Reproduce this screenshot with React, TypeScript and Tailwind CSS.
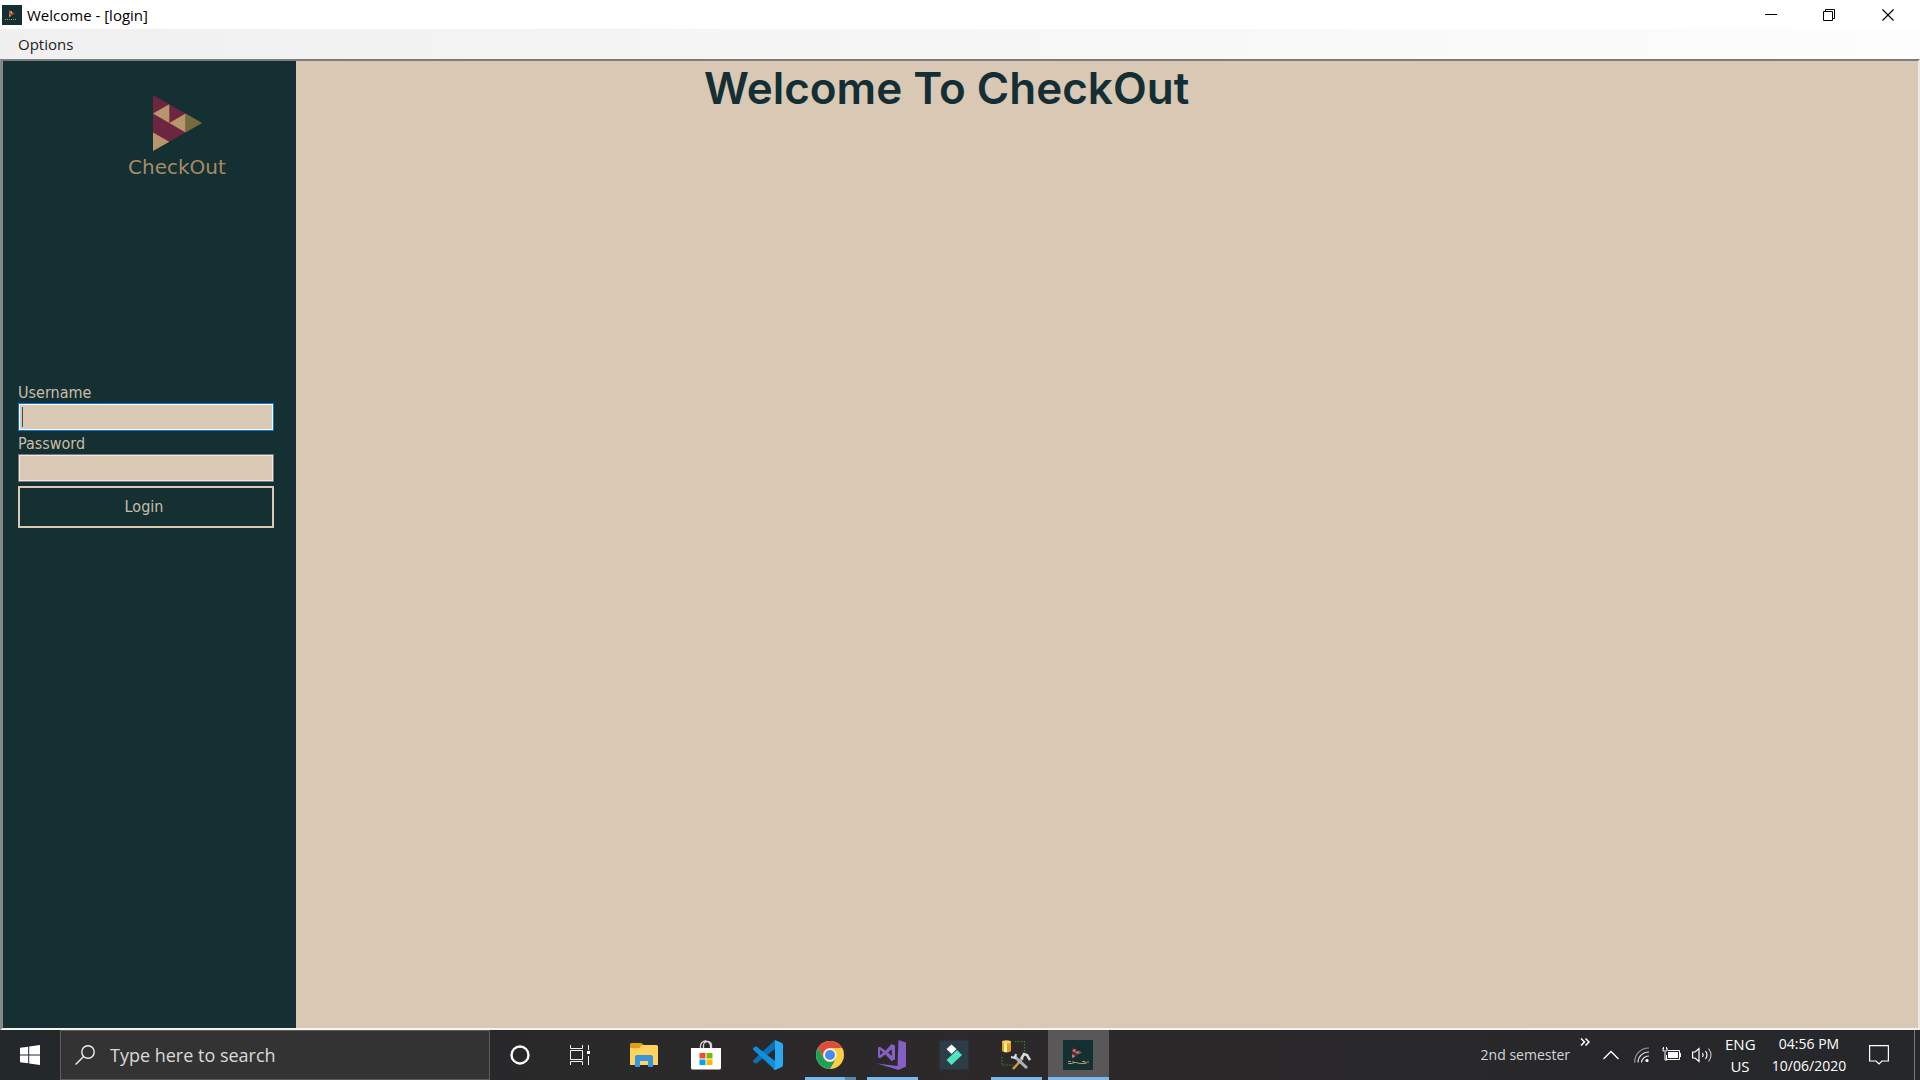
import type { ReactNode } from 'react';

function CheckoutMark({ className }: { className: string }) {
  return (
    <svg className={className} viewBox="0 0 49 56" aria-hidden="true">
      <path d="M0 0 49 28 0 56Z" fill="#6d2640" />
      <path d="M0 18.5 16.3 9.3V28Z" fill="#b8966b" />
      <path d="M16.3 28 32.6 18.6V37.4Z" fill="#b8966b" />
      <path d="M0 37.4 16.3 46.7 0 56Z" fill="#b8966b" />
      <path d="M32.6 18.6 49 28 32.6 37.4Z" fill="#766b3c" />
    </svg>
  );
}

function TitleBar() {
  return (
    <header className="flex h-[29px] shrink-0 items-center bg-white">
      <span className="ml-0.5 flex size-5 items-center justify-center bg-[#143032]">
        <svg viewBox="0 0 20 20" className="size-5" aria-hidden="true">
          <path d="M7 5l6 3.5L7 12Z" fill="#a8433f" />
          <path d="M7 7l3-1v3ZM7 12l2-1-2-2Z" fill="#c9a06f" />
          <path d="M3 14.5h11" stroke="#b8966b" strokeDasharray="1 1" />
        </svg>
      </span>
      <h1 className="ml-[5px] text-[15px] leading-5 text-black">Welcome - [login]</h1>
      <div className="ml-auto flex h-full pr-0.5">
        <button aria-label="Minimize" className="flex w-[58px] items-center justify-center">
          <svg width="12" height="12" viewBox="0 0 12 12"><path d="M0 5.5h12" stroke="#000" /></svg>
        </button>
        <button aria-label="Restore" className="flex w-[58px] items-center justify-center">
          <svg width="12" height="12" viewBox="0 0 12 12" fill="none" stroke="#000">
            <path d="M.5 2.5h9v9h-9zM2.5 2.5v-2h9v9h-2" />
          </svg>
        </button>
        <button aria-label="Close" className="flex w-[60px] items-center justify-center">
          <svg width="12" height="12" viewBox="0 0 12 12"><path d="M.5 .5l11 11M11.5 .5l-11 11" stroke="#000" strokeWidth="1.2" /></svg>
        </button>
      </div>
    </header>
  );
}

function LoginForm() {
  return (
    <form className="mt-[204px] mr-[22px] ml-[15px] flex flex-col font-['DejaVu_Sans_Condensed','DejaVu_Sans',sans-serif] text-base leading-5 text-[#c9bda9]" onSubmit={(e) => e.preventDefault()}>
      <label htmlFor="username">Username</label>
      <div className="relative mb-[3px]">
        <input
          id="username"
          type="text"
          className="block h-7 w-full border border-[#0078d7] bg-[#d9c8b3] px-1 text-black ring-1 ring-white outline-none ring-inset"
        />
        <span className="absolute top-1 left-1 h-5 w-px bg-[#4a4a4a]" />
      </div>
      <label htmlFor="password">Password</label>
      <input
        id="password"
        type="password"
        className="mb-1 block h-7 w-full border border-[#7a7a7a] bg-[#d9c8b3] px-1 text-black ring-1 ring-[#f0e8e4] outline-none ring-inset"
      />
      <button type="submit" className="h-[42px] border-2 border-[#d9c8b3] bg-[#143032] pr-1">
        Login
      </button>
    </form>
  );
}

function Task({ label, state, children }: { label: string; state?: 'open' | 'stacked' | 'active'; children: ReactNode }) {
  return (
    <button
      aria-label={label}
      className={
        state === 'active'
          ? 'relative mr-px flex w-[61px] items-center justify-center bg-[#5a5758] pr-px'
          : 'relative mr-px flex w-[61px] items-center justify-center pr-0.5'
      }
    >
      {children}
      {state === 'active' && <span className="absolute inset-x-0 bottom-0 h-[3px] bg-[#76b9ed]" />}
      {state === 'open' && <span className="absolute inset-x-[5px] bottom-0 h-[3px] bg-[#76b9ed]" />}
      {state === 'stacked' && (
        <span className="absolute inset-x-[5px] bottom-0 h-[3px] border-r-[11px] border-[#5a87ac] bg-[#76b9ed]" />
      )}
    </button>
  );
}

function Taskbar() {
  return (
    <footer className="flex h-[50px] shrink-0 bg-linear-to-r from-[#23282a] via-[#2d292a] to-[#25272a] text-white">
      <button aria-label="Start" className="flex w-[60px] items-center justify-center">
        <svg width="20" height="20" viewBox="0 0 20 20" fill="#fff">
          <path d="M0 2.8 8.2 1.7V9.5H0ZM9.2 1.5 20 0V9.5H9.2ZM0 10.5H8.2V18.3L0 17.2ZM9.2 10.5H20V20L9.2 18.5Z" />
        </svg>
      </button>
      <div className="flex w-[430px] items-center border border-[#5c5c5c] bg-[#333333] pl-3.5">
        <svg width="20" height="20" viewBox="0 0 20 20" fill="none" stroke="#f0f0f0" strokeWidth="1.4">
          <circle cx="13" cy="7" r="6.2" />
          <path d="M8.6 11.4.6 19.4" />
        </svg>
        <input
          type="text"
          aria-label="Search"
          placeholder="Type here to search"
          className="ml-[15px] min-w-0 flex-1 bg-transparent text-lg leading-6 outline-none placeholder:text-[#dadada]"
        />
      </div>
      <button aria-label="Cortana" className="flex w-[60px] items-center justify-center">
        <svg width="20" height="20" viewBox="0 0 20 20"><circle cx="10" cy="10" r="8.5" fill="none" stroke="#fff" strokeWidth="2.4" /></svg>
      </button>
      <button aria-label="Task View" className="flex w-[60px] items-center justify-center">
        <svg width="20" height="20" viewBox="0 0 20 20" fill="none" stroke="#f4f4f4">
          <path d="M.5 0v3.5h12V0M.5 5.5h12v9H.5zM.5 20v-3.5h12V20M18.5 0v5M18.5 11v9" />
          <path d="M17 6h3v3h-3z" fill="#fff" stroke="none" />
        </svg>
      </button>
      <nav aria-label="Apps" className="ml-1 flex">
        <Task label="File Explorer">
          <svg width="28" height="24" viewBox="0 0 28 24">
            <path d="M0 1.5Q0 0 1.5 0h10L14 2.5 11 6H0Z" fill="#e0a010" />
            <path d="M0 5h9l3.5-3H26.5Q28 2 28 3.5V22H0Z" fill="#ffd35e" />
            <path d="M5 24V14q0-2 2-2h14q2 0 2 2v10h-5v-6h-8v6Z" fill="#3a93dd" />
          </svg>
        </Task>
        <Task label="Microsoft Store">
          <svg width="30" height="30" viewBox="0 0 30 30">
            <path d="M9.5 8V6a5 5 0 0 1 10 0v2M12.5 8V6a4 4 0 0 1 8-1v3" fill="none" stroke="#d8d8d8" strokeWidth="1.3" />
            <path d="M0 8h30v20q0 1.500-1.500 1.500h-27Q0 29.500 0 28Z" fill="#fff" />
            <path d="M8.500 13h6v5.500h-6z" fill="#f25022" />
            <path d="M15.500 13h6v5.500h-6z" fill="#7fba00" />
            <path d="M8.500 19.500h6V25h-6z" fill="#00a4ef" />
            <path d="M15.500 19.500h6V25h-6z" fill="#ffb900" />
          </svg>
        </Task>
        <Task label="Visual Studio Code">
          <svg width="30" height="30" viewBox="0 0 30 30">
            <path d="M22 0 0 20.500v1.200L2 23.200q1 .4 1.700 0L22 9Z" fill="#0d6fb5" />
            <path d="M22 30 0 9.500V8.300L2 6.800q1-.4 1.700 0L22 21Z" fill="#0f8fdc" />
            <path d="M22 0 28.500 2.800Q30 3.500 30 5v20q0 1.500-1.500 2.200L22 30Q20 29.500 22 27Z" fill="#28a9f1" />
          </svg>
        </Task>
        <Task label="Google Chrome" state="stacked">
          <svg width="28" height="28" viewBox="0 0 28 28">
            <circle cx="14" cy="14" r="14" fill="#ffcd40" />
            <path d="M1.900 7A14 14 0 0 1 26.100 7H14A7 7 0 0 0 7.900 17.500Z" fill="#dc4b3e" />
            <path d="M1.900 7A14 14 0 0 0 14 28L20.100 17.500A7 7 0 0 1 7.900 17.500Z" fill="#1aa15f" />
            <circle cx="14" cy="14" r="6.500" fill="#f4f4f4" />
            <circle cx="14" cy="14" r="5" fill="#4a8af4" />
          </svg>
        </Task>
        <Task label="Visual Studio" state="open">
          <svg width="30" height="30" viewBox="0 0 30 30" fill="#865fc5">
            <path d="M21.500 0 29 2.500V26.500L21.500 30 0 23.500 20.500 26Z" />
            <path fillRule="evenodd" d="M1 7.500 3 6.700 8.500 10.800 14.500 4 18 5.500V19.500L14.500 21 8.500 14.400 3 18.300 1 17.500ZM3.200 9.700V15.300L6 12.600ZM11 12.600 14.800 16V9.200Z" />
          </svg>
        </Task>
        <Task label="Filmora">
          <svg width="30" height="30" viewBox="0 0 30 30">
            <path d="M.5.500h29v29H.5z" fill="#2d3d47" />
            <path d="M12.500 4.500 17.500 9 12.500 14 7.500 9Z" fill="#fff" />
            <path d="M18 10 23 15 12.500 25 7.500 20Z" fill="#4fe3c1" />
          </svg>
        </Task>
        <Task label="SQL Server tools" state="open">
          <svg width="30" height="30" viewBox="0 0 30 30" fill="none">
            <path d="M14 1.500H23.500V12M1 17v8H12" stroke="#2c8a22" strokeWidth="1.200" strokeDasharray="1.500 1.500" />
            <path d="M1 2v9q4.500 3 9 0V2Z" fill="#e0a31c" />
            <path d="M3 3h3v9H3Z" fill="#fff0a0" />
            <ellipse cx="5.500" cy="2" rx="4.500" ry="1.700" fill="#f6d35b" />
            <path d="M12 29 22 18" stroke="#d59b35" strokeWidth="2.500" />
            <path d="M20 19 23 14l3 1 3 5" stroke="#d5dce4" strokeWidth="2.500" />
            <path d="M13 16 26 28" stroke="#a9b5c4" strokeWidth="3" />
            <path d="M10 17l4 1 1-4" stroke="#d5dce4" strokeWidth="2" />
          </svg>
        </Task>
        <Task label="CheckOut" state="active">
          <span className="flex size-[30px] flex-col items-center bg-[#143032] pt-[7px]">
            <CheckoutMark className="mr-0.5 h-[11px] w-[10px]" />
            <svg width="22" height="5" viewBox="0 0 22 5" className="mt-0.5" aria-hidden="true">
              <path d="M1 1.500h3M1 3.500h4M6 1v3M6 2.500h4M11 2v2M12 3.500h3M15 1.500h3v2h-3M19 2v2M20 2h2" stroke="#b8966b" fill="none" />
            </svg>
          </span>
        </Task>
      </nav>
      <div className="ml-auto flex items-center">
        <span className="text-sm leading-5 text-[#d6d6d6]">2nd semester</span>
        <button aria-label="More toolbar items" className="mb-[26px] ml-[10px]">
          <svg width="10" height="8" viewBox="0 0 10 8" fill="none" stroke="#fff" strokeWidth="1.500"><path d="M1 .5 4.500 4 1 7.500M5.500 .5 9 4 5.500 7.500" /></svg>
        </button>
        <button aria-label="Hidden icons" className="ml-[13px]">
          <svg width="16" height="10" viewBox="0 0 16 10" fill="none" stroke="#fff" strokeWidth="1.300"><path d="M.5 9 8 1.500 15.500 9" /></svg>
        </button>
        <button aria-label="Network" className="ml-[15px]">
          <svg width="16" height="16" viewBox="0 0 16 16" fill="none" strokeWidth="1.200">
            <path d="M.7 15.500A14 14 0 0 1 15 1" stroke="#9a9a9a" />
            <path d="M4 15.500A10.500 10.500 0 0 1 15 5M7.500 15.500A7 7 0 0 1 15 9" stroke="#ddd" />
            <circle cx="13" cy="13.500" r="1.600" fill="#fff" />
          </svg>
        </button>
        <button aria-label="Battery" className="ml-3">
          <svg width="20" height="16" viewBox="0 0 20 16" fill="none" stroke="#fff">
            <path d="M6 3.500H17.500V12.500H4.500V8M18.500 6v4M1 1v3h4V1M3 5v8h2M1.500 0v2M4.500 0v2" />
            <path d="M6 5h10v6H6z" fill="#fff" stroke="none" />
          </svg>
        </button>
        <button aria-label="Volume" className="ml-[10px]">
          <svg width="21" height="18" viewBox="0 0 21 18" fill="none" stroke="#fff" strokeWidth="1.200">
            <path d="M.6 6H3L7 2.500V15.500L3 12H.6ZM10.500 7q1.500 2 0 4M13.500 5q3 4 0 8" />
            <path d="M16.500 2.500q5 6.500 0 13" stroke="#bbb" />
          </svg>
        </button>
        <button className="ml-3 w-[30px] text-center text-[15px] leading-[22px]">
          <span className="block">ENG</span>
          <span className="block">US</span>
        </button>
        <button className="ml-[15px] w-[78px] text-center text-sm leading-[22px] whitespace-nowrap">
          <span className="block">04:56 PM</span>
          <span className="block">10/06/2020</span>
        </button>
        <button aria-label="Notifications" className="ml-[21px]">
          <svg width="20" height="20" viewBox="0 0 20 20" fill="none" stroke="#fff" strokeWidth="1.200">
            <path d="M.6 .6h18.800v15.400H13L10 19 7 16H.6Z" />
          </svg>
        </button>
        <button aria-label="Show desktop" className="ml-[25px] h-[50px] w-[6px] border-l border-[#77797a]" />
      </div>
    </footer>
  );
}

export default function App() {
  return (
    <div className="flex h-screen flex-col overflow-hidden font-['Open_Sans','Noto_Sans',sans-serif]">
      <TitleBar />
      <nav className="flex h-[30px] shrink-0 items-center bg-linear-to-r from-[#f0f0f0] to-[#fdfdfd]">
        <button className="ml-[18px] text-[15px] leading-5 text-[#1c1c1c]">Options</button>
      </nav>
      <main className="flex min-h-0 flex-1 border-t-2 border-r-2 border-b-2 border-l-[3px] border-t-[#7c7c7c] border-r-[#ece8e4] border-b-[#f3f3ef] border-l-[#898989] bg-[#d9c8b3]">
        <aside className="w-[293px] shrink-0 bg-[#143032] pt-[34px]">
          <div className="ml-[124px] flex w-[100px] flex-col items-center">
            <CheckoutMark className="h-14 w-[49px]" />
            <p className="mt-1 font-['DejaVu_Sans',sans-serif] text-[20px] leading-6 text-[#a88b66]">CheckOut</p>
          </div>
          <LoginForm />
        </aside>
        <section className="flex-1 pl-[408px]">
          <h2 className="font-['Inter',sans-serif] text-[44px] leading-[54px] font-semibold whitespace-nowrap text-[#132f35]">
            Welcome To CheckOut
          </h2>
        </section>
      </main>
      <Taskbar />
    </div>
  );
}
